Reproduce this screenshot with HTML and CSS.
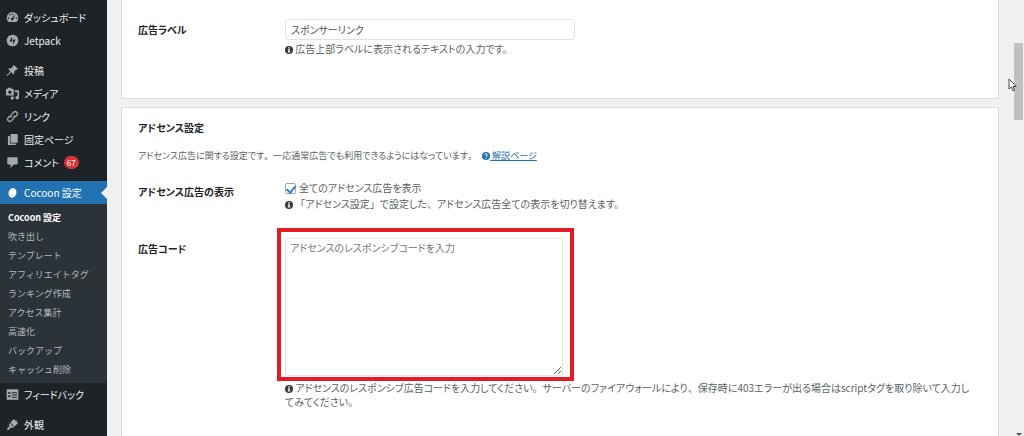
FILE: index.html
```html
<!DOCTYPE html>
<html lang="ja">
<head>
    <meta charset="UTF-8">
    <meta name="viewport" content="width=device-width, initial-scale=1.0">
    <title>Cocoon 設定</title>
    <link rel="stylesheet" href="styles.css">
</head>
<body>
    <svg class="sprite" aria-hidden="true">
        <symbol id="info" viewBox="0 0 16 16">
            <circle cx="8" cy="8" r="8" fill="currentColor"/>
            <path d="M6.6 2.5h3v2.4h-3zM5.6 6.3h4v5h1.2v1.9H5.4v-1.9h1.2V8.2h-1z" fill="#fff"/>
        </symbol>
    </svg>

    <nav class="sidebar">
        <ul class="menu">
            <li><a href="#">
                <svg class="icon" viewBox="0 0 20 20"><path fill-rule="evenodd" d="M3.8 17A9 9 0 1 1 16.2 17zM9 3.5v2.3h2V3.5zM4.6 5.6l1.5 1.6 1.3-1.3-1.5-1.5zM2.8 10v2h2.4v-2zM14.8 10v2h2.4v-2zM14.6 4.8l-5 5.6a2 2 0 1 0 2 1.5z"/></svg>
                ダッシュボード</a></li>
            <li><a href="#">
                <svg class="icon" viewBox="0 0 20 20"><path fill-rule="evenodd" d="M10 1a9 9 0 1 0 0 18 9 9 0 0 0 0-18zM9.4 3.5v8H5.2zM10.6 16.5v-8h4.2z"/></svg>
                Jetpack</a></li>
            <li class="gap"><a href="#">
                <svg class="icon" viewBox="0 0 20 20"><path d="M12.2 1.5l6.3 6.3-1.8 1-1-.2-3.3 3.3c.4 1.6.2 3-.9 4.1l-3.6-3.6L2 18.3l-.9-.3.3-1.1 5.4-5.7L3.3 7.8c1.1-1.1 2.6-1.3 4.2-.9l3.6-3.4-.2-1z"/></svg>
                投稿</a></li>
            <li><a href="#">
                <svg class="icon" viewBox="0 0 20 20"><path fill-rule="evenodd" d="M0 3h2l1-2h5l1 2h3v10H0zM6 5.500a2.500 2.500 0 1 0 0 5 2.500 2.500 0 0 0 0-5zM13.500 5H20v11.500a2.800 2.800 0 1 1-2.500-2.800V8h-4zM9 14.500h3v2.500a2.500 2.500 0 1 1-3-2.500z"/></svg>
                メディア</a></li>
            <li><a href="#">
                <svg class="icon line" viewBox="0 0 20 20"><path d="M8.500 11.500a3.400 3.400 0 0 1 0-4.800l3.300-3.300a3.400 3.400 0 0 1 4.800 4.800L14 10.800M11.500 8.500a3.400 3.400 0 0 1 0 4.800l-3.300 3.300a3.400 3.400 0 0 1-4.800-4.800L6 9.200"/></svg>
                リンク</a></li>
            <li><a href="#">
                <svg class="icon" viewBox="0 0 20 20"><path d="M7 1.500h11V15H7zM3 4.500h3V16h9v2.500H3z"/></svg>
                固定ページ</a></li>
            <li><a href="#">
                <svg class="icon" viewBox="0 0 20 20"><path d="M4 2h12a2 2 0 0 1 2 2v7a2 2 0 0 1-2 2h-4l-5 5.500V13H4a2 2 0 0 1-2-2V4a2 2 0 0 1 2-2z"/></svg>
                コメント <span class="count">67</span></a></li>
            <li class="gap"><a href="#" class="current">
                <svg class="icon" viewBox="0 0 20 20"><ellipse cx="10" cy="10.500" rx="6" ry="7.500" transform="rotate(18 10 10.500)"/></svg>
                Cocoon 設定</a>
                <ul class="submenu">
                    <li><a href="#" class="active">Cocoon 設定</a></li>
                    <li><a href="#">吹き出し</a></li>
                    <li><a href="#">テンプレート</a></li>
                    <li><a href="#">アフィリエイトタグ</a></li>
                    <li><a href="#">ランキング作成</a></li>
                    <li><a href="#">アクセス集計</a></li>
                    <li><a href="#">高速化</a></li>
                    <li><a href="#">バックアップ</a></li>
                    <li><a href="#">キャッシュ削除</a></li>
                </ul>
            </li>
            <li><a href="#">
                <svg class="icon" viewBox="0 0 20 20"><path fill-rule="evenodd" d="M1 2h18v16H1zM3 6.500V9h4V6.500zM9 6.500V8h8V6.500zM3 11.500V14h4v-2.500zM9 10v1.500h8V10zM9 13.500V15h8v-1.500z"/></svg>
                フィードバック</a></li>
            <li class="gap"><a href="#">
                <svg class="icon" viewBox="0 0 20 20"><path d="M12.500 1.500l1.800 2.600 2.200-1.300-.6 2.700 2.900 1.900-5.900 5.900-6.300-6.300zM5.700 7.800l6.400 6.400-2.200 1.300-2.200-1.200c-1.600 2.200-3 4.200-4.500 4.200s-2-1.800-1-3c.9-1.200 2.300-1.900 3.600-2.900L4.400 10z"/></svg>
                外観</a></li>
        </ul>
    </nav>

    <main class="content">
        <section class="card">
            <div class="field">
                <label class="field-name" for="ad-label">広告ラベル</label>
                <div class="field-body">
                    <input type="text" id="ad-label" class="text-input" value="スポンサーリンク">
                    <p class="tips"><svg class="mark"><use href="#info"/></svg> 広告上部ラベルに表示されるテキストの入力です。</p>
                </div>
            </div>
        </section>

        <section class="card adsense">
            <h2>アドセンス設定</h2>
            <p class="lead">アドセンス広告に関する設定です<span class="full">。</span>一応通常広告でも利用できるようにはなっています<span class="full">。</span>
                <a href="#"><svg class="mark" viewBox="0 0 16 16"><circle cx="8" cy="8" r="8" fill="currentColor"/><path d="M5.500 6.200c0-3.600 5.300-3.400 5.300-.4 0 2-2.600 1.800-2.600 4" fill="none" stroke="#fff" stroke-width="2"/><path d="M7.100 11h2.200v2.200H7.100z" fill="#fff"/></svg> 解説ページ</a></p>

            <div class="field">
                <div class="field-name">アドセンス広告の表示</div>
                <div class="field-body">
                    <label class="check"><input type="checkbox" checked> 全てのアドセンス広告を表示</label>
                    <p class="tips"><svg class="mark"><use href="#info"/></svg> <span class="full">「</span>アドセンス設定<span class="full">」</span>で設定した<span class="full">、</span>アドセンス広告全ての表示を切り替えます。</p>
                </div>
            </div>

            <div class="field code">
                <label class="field-name" for="ad-code">広告コード</label>
                <div class="field-body">
                    <div class="highlight">
                        <textarea id="ad-code" placeholder="アドセンスのレスポンシブコードを入力"></textarea>
                    </div>
                    <p class="tips"><svg class="mark"><use href="#info"/></svg> アドセンスのレスポンシブ広告コードを入力してください<span class="full">。</span>サーバーのファイアウォールにより<span class="full">、</span>保存時に403エラーが出る場合はscriptタグを取り除いて入力してみてください。</p>
                </div>
            </div>
        </section>
    </main>

    <div class="scrollbar">
        <div class="thumb"></div>
        <div class="down"></div>
    </div>

    <svg class="cursor" viewBox="0 0 9 14"><path d="M1 1v10l2.400-2 1.600 3.800 1.600-.7L5 8.500h3.200z" fill="#fff" stroke="#444"/></svg>
</body>
</html>
```

FILE: styles.css
```css
* {
    box-sizing: border-box;
}
body {
    display: flex;
    height: 100vh;
    margin: 0;
    overflow: hidden;
    background: #f0f0f1;
    color: #5a5f64;
    font-family: "Noto Sans CJK JP", sans-serif;
    font-size: 10px;
    line-height: 14px;
    font-feature-settings: "palt";
}
h2, p, ul {
    margin: 0;
    padding: 0;
}
ul {
    list-style: none;
}
input, textarea {
    font: inherit;
    font-feature-settings: inherit;
}
.sprite {
    position: absolute;
    width: 0;
    height: 0;
}
/* 約物は全角のまま */
.full {
    font-feature-settings: normal;
}

/* 左メニュー */
.sidebar {
    flex: 0 0 107px;
    padding-top: 6px;
    background: #1d2327;
}
.menu a {
    position: relative;
    display: flex;
    align-items: center;
    gap: 5px;
    height: 23px;
    padding-left: 6px;
    color: #f0f0f1;
    text-decoration: none;
    white-space: nowrap;
}
.menu .gap {
    margin-top: 7px;
}
.icon {
    width: 13px;
    height: 13px;
    fill: #a7aaad;
}
.icon.line {
    fill: none;
    stroke: #a7aaad;
    stroke-width: 2;
}
.count {
    padding: 0 3px;
    border-radius: 7px;
    background: #d63638;
    color: #fff;
    font-size: 8px;
    line-height: 13px;
}
.menu .current {
    background: #2271b1;
    color: #fff;
}
.current .icon {
    fill: #fff;
}
.current::after {
    content: "";
    position: absolute;
    right: 0;
    top: 6px;
    border: 6px solid transparent;
    border-left: 0;
    border-right-color: #f0f0f1;
}
.submenu {
    padding: 4px 0;
    background: #2c3338;
    font-feature-settings: normal;
}
.submenu a {
    height: 19px;
    padding-left: 8px;
    color: #b4b9be;
    font-size: 9px;
}
.submenu .active {
    color: #fff;
    font-weight: bold;
}

/* 設定パネル */
.content {
    flex: 1;
    min-width: 0;
    padding: 0 14px;
}
.card {
    padding: 19px 24px 42px 16px;
    border: 1px solid #dcdcde;
    border-top: 0;
    background: #fff;
}
.adsense {
    min-height: 100%;
    margin-top: 8px;
    padding-top: 13px;
    border-top: 1px solid #dcdcde;
}
h2 {
    color: #1d2327;
    font-size: 10px;
    line-height: 14px;
}
.lead {
    margin: 14px 0 18px;
    font-size: 9px;
}
.lead a {
    margin-left: 3px;
    color: #2271b1;
}
.field {
    display: flex;
}
.field-name {
    flex: 0 0 147px;
    padding-top: 4px;
    color: #1d2327;
    font-weight: bold;
}
.field-body {
    flex: 1;
    min-width: 0;
}
.text-input {
    display: block;
    width: 290px;
    height: 21px;
    padding: 0 5px;
    border: 1px solid #e2e2e4;
    border-radius: 3px;
    color: #50555a;
}
.tips {
    margin-top: 2px;
}
.mark {
    width: 8px;
    height: 8px;
    color: #32373c;
    vertical-align: -1px;
}
.lead .mark {
    color: #2271b1;
}
.check {
    display: flex;
    align-items: center;
    gap: 3px;
}
.check input {
    appearance: none;
    display: grid;
    place-items: center;
    width: 11px;
    height: 11px;
    margin: 0;
    border: 1px solid #a0a3a8;
    border-radius: 2px;
    background: #fff;
}
.check input:checked::before {
    content: "";
    width: 4px;
    height: 7px;
    border: solid #3582c4;
    border-width: 0 2px 2px 0;
    transform: rotate(40deg);
}
.code {
    margin-top: 27px;
}
.highlight {
    position: relative;
    width: 278px;
}
.highlight::after {
    content: "";
    position: absolute;
    inset: -10px -11px -5px -8px;
    border: 4px solid #e31b23;
    pointer-events: none;
}
textarea {
    display: block;
    width: 100%;
    height: 138px;
    padding: 2px 4px;
    border: 1px solid #e4e2ea;
    border-radius: 2px;
}
textarea::placeholder {
    color: #757575;
}
.code .tips {
    margin-top: 5px;
}

/* スクロールバー */
.scrollbar {
    display: flex;
    flex: 0 0 11px;
    flex-direction: column;
    justify-content: space-between;
    align-items: center;
    padding: 43px 1px 0;
}
.thumb {
    width: 100%;
    height: 77px;
    background: #c1c1c1;
}
.down {
    border: 3px solid transparent;
    border-top-color: #505050;
    border-bottom: 0;
}
.cursor {
    position: absolute;
    top: 78px;
    left: 1008px;
    width: 9px;
    height: 14px;
}
```
